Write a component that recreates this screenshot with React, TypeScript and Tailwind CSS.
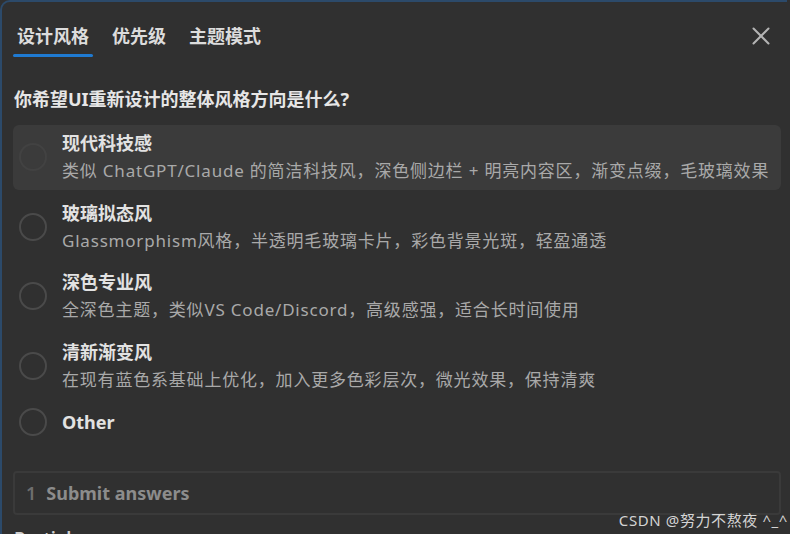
import { X } from 'lucide-react';

const options = [
  { title: '现代科技感', desc: '类似 ChatGPT/Claude 的简洁科技风，深色侧边栏 + 明亮内容区，渐变点缀，毛玻璃效果', active: true },
  { title: '玻璃拟态风', desc: 'Glassmorphism风格，半透明毛玻璃卡片，彩色背景光斑，轻盈通透' },
  { title: '深色专业风', desc: '全深色主题，类似VS Code/Discord，高级感强，适合长时间使用' },
  { title: '清新渐变风', desc: '在现有蓝色系基础上优化，加入更多色彩层次，微光效果，保持清爽' },
  { title: 'Other' },
];

const tabs = ['设计风格', '优先级', '主题模式'];

export default function App() {
  return (
    <div
      className="relative h-[534px] w-[790px] overflow-hidden bg-[#303030]"
      style={{ fontFamily: '"Noto Sans", "Noto Sans CJK SC", sans-serif' }}
    >
      <div className="h-full w-[787px] rounded-tl-[10px] border-l-2 border-t-2 border-[#2c4a6a] pl-[11px] pr-[6px]">
        {/* tabs */}
        <div className="flex items-start justify-between pt-[20px]">
          <div className="flex gap-[15px]">
            {tabs.map((t, i) => (
              <div key={t} className="flex flex-col items-center">
                <span className="px-[4px] text-[18px] leading-[28px] font-semibold text-[#dcdcdc]">{t}</span>
                <div className={`mt-[4px] h-[3px] w-full rounded-full ${i === 0 ? 'bg-[#1f7ad1]' : 'bg-transparent'}`} />
              </div>
            ))}
          </div>
          <X className="mr-[5px] -mt-[1px] h-[30px] w-[30px] text-[#b4b4b4]" strokeWidth={1.6} />
        </div>

        {/* question */}
        <h2 className="mt-[28px] pl-[1px] text-[18px] leading-[28px] font-bold text-[#e6e6e6]">
          你希望UI重新设计的整体风格方向是什么?
        </h2>

        {/* options */}
        <div className="mt-[12px] flex flex-col gap-[4.5px]">
          {options.map((o) => (
            <div
              key={o.title}
              className={`flex items-center gap-[15px] rounded-[6px] pl-[6px] pt-[5px] pb-[6px] ${o.active ? 'bg-[#3b3b3b]' : ''}`}
            >
              <div
                className={`h-[28px] w-[28px] shrink-0 rounded-full border-2 ${o.active ? 'border-[#424242]' : 'border-[#4a4a4a]'}`}
              />
              <div className="flex flex-col">
                <span className="text-[18px] leading-[27px] font-bold text-[#e2e2e2]">{o.title}</span>
                {o.desc && (
                  <span className="text-[17px] leading-[27px] whitespace-nowrap text-[#a9a9a9] tracking-[0.8px]">{o.desc}</span>
                )}
              </div>
            </div>
          ))}
        </div>

        {/* submit */}
        <div className="mt-[29px] flex h-[44px] items-center gap-[10px] rounded-[4px] border-2 border-[#3a3a3a] pl-[11px]">
          <span className="text-[18px] font-semibold text-[#6e6e6e]">1</span>
          <span className="text-[18px] font-bold text-[#8c8c8c]">Submit answers</span>
        </div>

        <div className="mt-[9px] pl-[1px] text-[18px] leading-[28px] font-semibold text-[#d0d0d0]">Partial answers</div>
      </div>

      <div className="absolute right-[2px] top-[509px] text-[15px] leading-[22px] tracking-[0.6px] text-[#d4d4d4]">CSDN @努力不熬夜 ^_^</div>
    </div>
  );
}
